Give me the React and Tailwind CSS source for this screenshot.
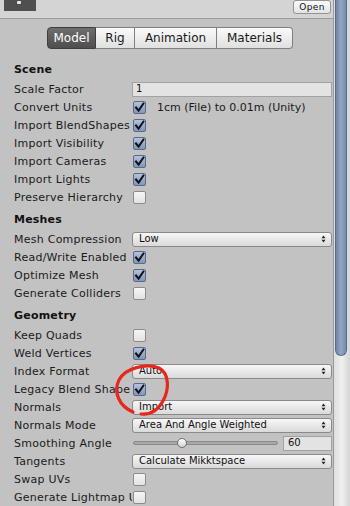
import React from "react";

const font = { fontFamily: '"DejaVu Sans", Verdana, sans-serif' };

function Check({ checked }) {
  return (
    <div
      className={
        "ml-[1px] flex h-[13px] w-[13px] shrink-0 items-center justify-center rounded-[2px] border " +
        (checked
          ? "border-[#5b6a86] bg-gradient-to-b from-[#b3c3de] to-[#7f96bd]"
          : "border-[#8c8c8c] bg-gradient-to-b from-[#f6f6f6] to-[#e2e2e2]")
      }
    >
      {checked && (
        <svg width="11" height="11" viewBox="0 0 11 11">
          <path d="M2 5.5 L4.6 8.6 L9.4 1.6" fill="none" stroke="#111" strokeWidth="2" strokeLinecap="square" />
        </svg>
      )}
    </div>
  );
}

function Arrows() {
  return (
    <svg width="5" height="8" viewBox="0 0 5 8" className="shrink-0">
      <path d="M0.5 3.2 L2.5 0.5 L4.5 3.2 Z" fill="#222" />
      <path d="M0.5 4.8 L2.5 7.5 L4.5 4.8 Z" fill="#222" />
    </svg>
  );
}

function Dropdown({ value }) {
  return (
    <div className="flex h-[15px] w-full items-center rounded-[3px] border border-[#8a8a8a] bg-gradient-to-b from-[#f7f7f7] to-[#dadada] pl-[6px] pr-[5px] text-[10px] leading-none text-[#111]">
      <span className="flex-1 whitespace-nowrap">{value}</span>
      <Arrows />
    </div>
  );
}

function Row({ label, children }) {
  return (
    <div className="flex h-[18px] items-center">
      <div className="w-[118px] shrink-0 overflow-hidden whitespace-nowrap text-[11px] leading-none tracking-[0.25px] text-[#1a1a1a]">
        {label}
      </div>
      <div className="flex min-w-0 flex-1 items-center">{children}</div>
    </div>
  );
}

function Header({ children }) {
  return (
    <div className="pb-[2px] pt-[4px]">
      <div className="flex h-[18px] items-center text-[11px] font-bold leading-none tracking-[0.2px] text-[#111]">{children}</div>
    </div>
  );
}

function Tab({ label, w, active, first, last }) {
  return (
    <div
      className={
        "flex h-[22px] items-center justify-center border-y border-r text-[12px] leading-none " +
        (first ? "rounded-l-[4px] border-l " : "") +
        (last ? "rounded-r-[4px] " : "") +
        (active
          ? "border-[#3e3e3e] bg-gradient-to-b from-[#6e6e6e] to-[#4e4e4e] text-white"
          : "border-[#7f7f7f] bg-gradient-to-b from-[#fafafa] to-[#e0e0e0] text-[#1a1a1a]")
      }
      style={{ width: w }}
    >
      {label}
    </div>
  );
}

export default function App() {
  return (
    <div className="relative flex h-[506px] w-[350px] overflow-hidden bg-[#c2c2c2]" style={font}>
      <div className="flex w-[333px] shrink-0 flex-col">
        {/* top bar */}
        <div className="flex h-[19px] shrink-0 items-start border-b border-[#9c9c9c] bg-[#d4d4d4]">
          <div className="ml-[4px] flex h-[11px] w-[32px] items-start justify-center bg-[#4f4f4f]">
            <div className="ml-[-2px] mt-[1px] h-[3px] w-[4px] rounded-[1px] bg-[#e8e8e8]" />
          </div>
          <div className="ml-auto mr-[2px] flex h-[14px] w-[38px] items-center justify-center rounded-[3px] border border-[#939393] bg-gradient-to-b from-[#fbfbfb] to-[#e3e3e3] text-[9px] leading-none tracking-[0.4px] text-[#111]">
            Open
          </div>
        </div>

        {/* tabs */}
        <div className="mt-[8px] flex pl-[47px]">
          <Tab label="Model" w={49} active first />
          <Tab label="Rig" w={39} />
          <Tab label="Animation" w={82} />
          <Tab label="Materials" w={76} last />
        </div>

        <div className="mt-[7px] pl-[14px] pr-[1px]">
          <Header>Scene</Header>
          <Row label="Scale Factor">
            <div className="flex h-[15px] w-full items-center border border-[#a2a2a2] bg-[#e3e3e3] pl-[3px] text-[10px] leading-none text-[#111]">
              1
            </div>
          </Row>
          <Row label="Convert Units">
            <Check checked />
            <span className="ml-[11px] whitespace-nowrap text-[11px] leading-none text-[#1a1a1a]">
              1cm (File) to 0.01m (Unity)
            </span>
          </Row>
          <Row label="Import BlendShapes">
            <Check checked />
          </Row>
          <Row label="Import Visibility">
            <Check checked />
          </Row>
          <Row label="Import Cameras">
            <Check checked />
          </Row>
          <Row label="Import Lights">
            <Check checked />
          </Row>
          <Row label="Preserve Hierarchy">
            <Check />
          </Row>

          <Header>Meshes</Header>
          <Row label="Mesh Compression">
            <Dropdown value="Low" />
          </Row>
          <Row label="Read/Write Enabled">
            <Check checked />
          </Row>
          <Row label="Optimize Mesh">
            <Check checked />
          </Row>
          <Row label="Generate Colliders">
            <Check />
          </Row>

          <Header>Geometry</Header>
          <Row label="Keep Quads">
            <Check />
          </Row>
          <Row label="Weld Vertices">
            <Check checked />
          </Row>
          <Row label="Index Format">
            <Dropdown value="Auto" />
          </Row>
          <Row label="Legacy Blend Shape Normals">
            <Check checked />
          </Row>
          <Row label="Normals">
            <Dropdown value="Import" />
          </Row>
          <Row label="Normals Mode">
            <Dropdown value="Area And Angle Weighted" />
          </Row>
          <Row label="Smoothing Angle">
            <div className="relative ml-[1px] flex h-[14px] w-[145px] shrink-0 items-center">
              <div className="h-[4px] w-full rounded-full border border-[#8a8a8a] bg-[#a8a8a8]" />
              <div className="absolute left-[44px] top-[2px] h-[10px] w-[10px] rounded-full border border-[#6e6e6e] bg-gradient-to-b from-[#ffffff] to-[#d2d2d2]" />
            </div>
            <div className="ml-auto flex h-[15px] w-[49px] items-center border border-[#a2a2a2] bg-[#e3e3e3] pl-[4px] text-[10px] leading-none text-[#111]">
              60
            </div>
          </Row>
          <Row label="Tangents">
            <Dropdown value="Calculate Mikktspace" />
          </Row>
          <Row label="Swap UVs">
            <Check />
          </Row>
          <Row label="Generate Lightmap UVs">
            <Check />
          </Row>
        </div>
      </div>

      {/* scrollbar */}
      <div className="flex w-[17px] shrink-0 border-l border-[#9a9a9a] bg-gradient-to-r from-[#dedede] via-[#f0f0f0] to-[#d4d4d4] pl-[1px]">
        <div className="h-[356px] w-[12px] rounded-b-[6px] border-x border-b border-[#566a8c] bg-gradient-to-r from-[#6f84a8] via-[#94a6c4] to-[#7489ad]" />
      </div>

      {/* red annotation circle */}
      <svg className="pointer-events-none absolute left-0 top-0" width="350" height="506" viewBox="0 0 350 506">
        <path
          d="M133 412 C119 406 113 392 119 380 C125 368 146 363 159 368 C170 374 169 390 163 401 C158 410 150 415 141 414"
          fill="none"
          stroke="#e5281c"
          strokeWidth="3.2"
          strokeLinecap="round"
        />
      </svg>
    </div>
  );
}
